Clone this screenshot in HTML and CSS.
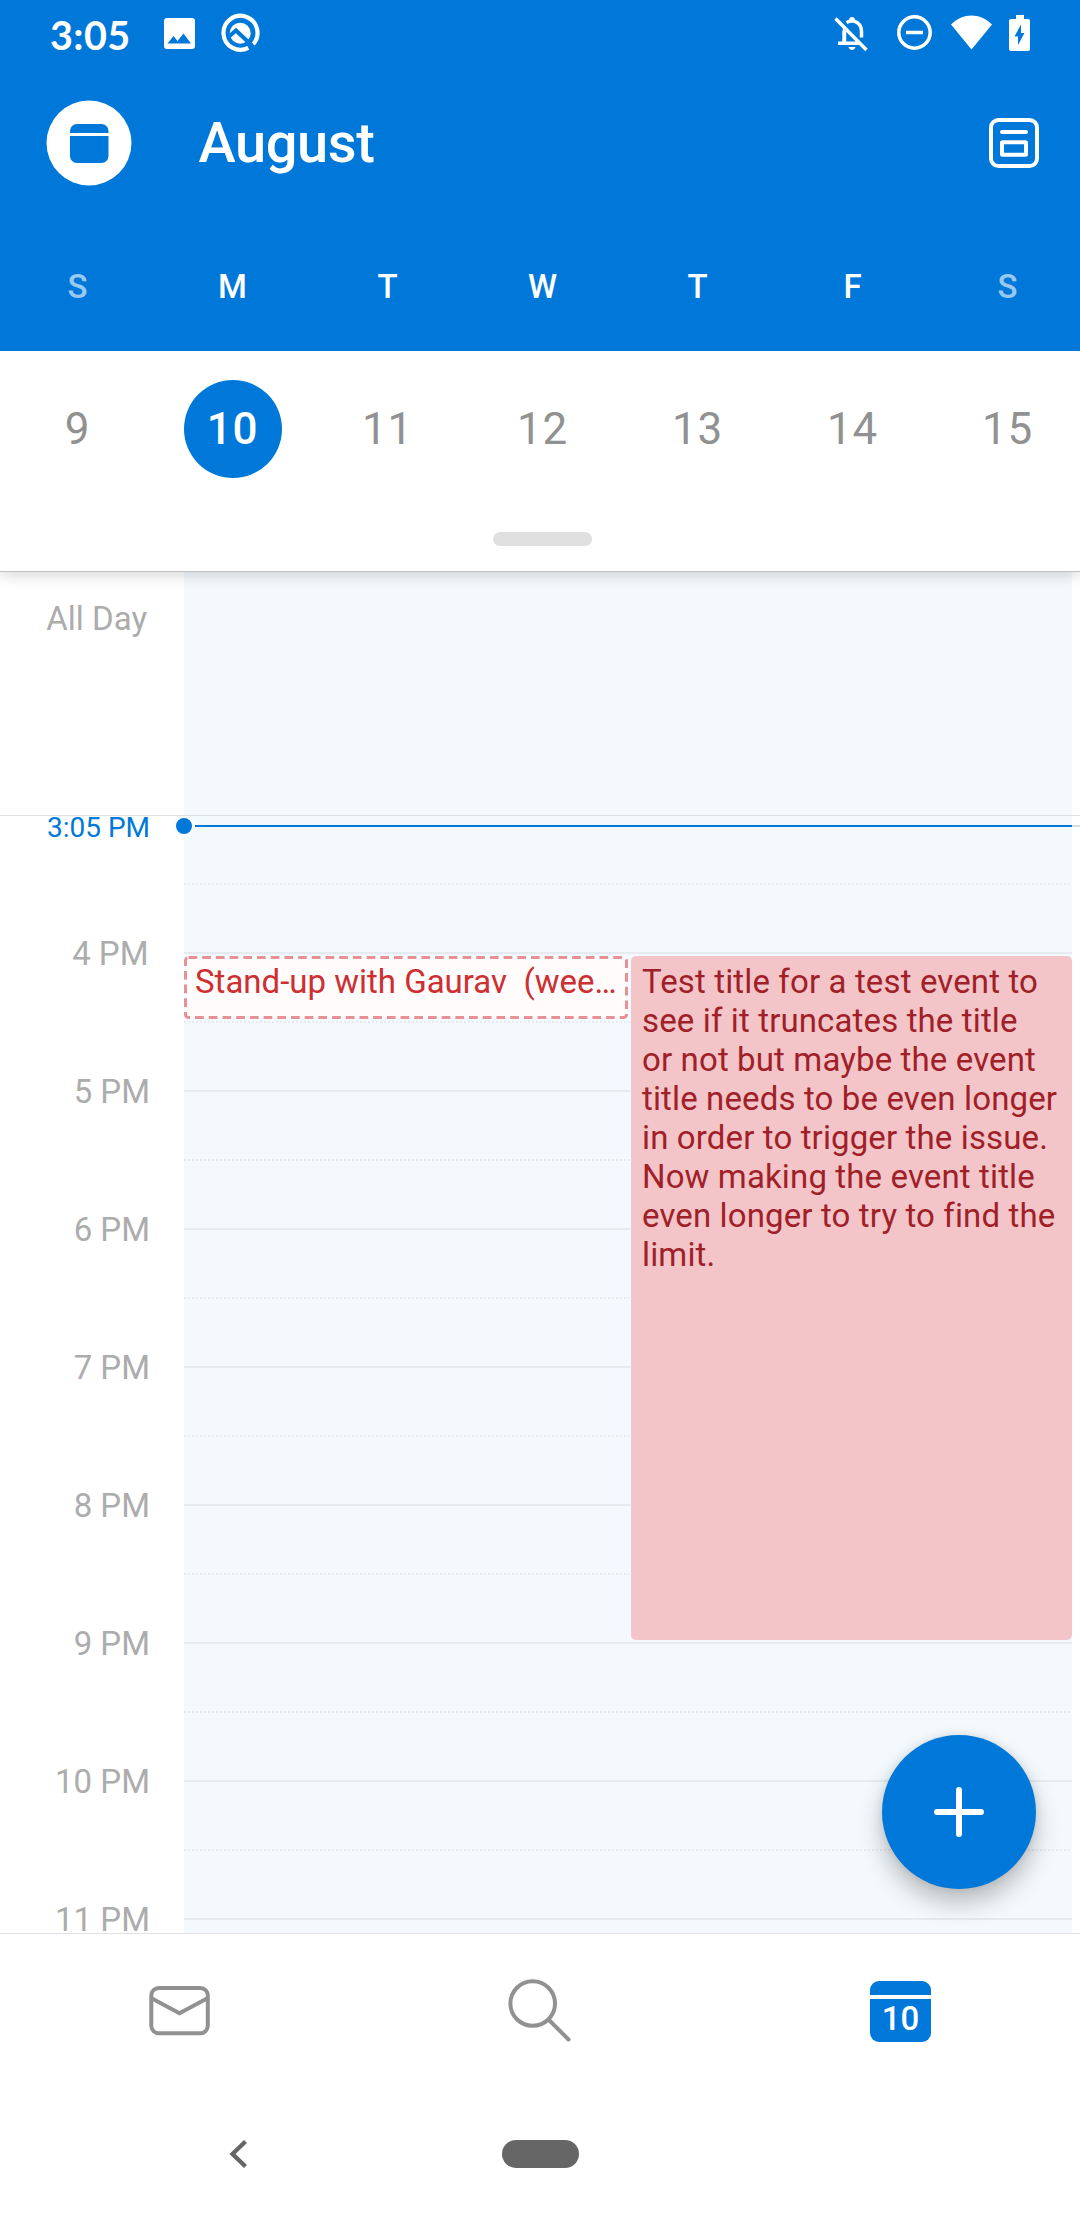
FILE: index.html
```html
<!DOCTYPE html>
<html lang="en">
<head>
<meta charset="utf-8">
<title>Calendar</title>
<link rel="stylesheet" href="styles.css">
</head>
<body>
<div class="screen">
  <header class="header">
    <div class="status">
      <span class="clock">3:05</span>
      <svg class="status-left" width="96" height="40" viewBox="164 13 96 40">
        <path fill="#fff" fill-rule="evenodd" d="M167 18h25a3 3 0 0 1 3 3v25a3 3 0 0 1-3 3h-25a3 3 0 0 1-3-3V21a3 3 0 0 1 3-3zM167.500 43.500h23.500l-7.500-10-6 7.500-4-5z"/>
        <path d="M248.300 47.900A17 17 0 1 1 253.100 44.200" fill="none" stroke="#fff" stroke-width="4.200"/>
        <circle cx="240.200" cy="33.200" r="10.500" fill="#fff"/>
        <path d="M229 36.500 L236 30.500 L252 45.500" fill="none" stroke="#0078d9" stroke-width="4"/>
      </svg>
      <svg class="status-right" width="200" height="40" viewBox="832 13 200 40">
        <g fill="none" stroke="#fff" stroke-width="3.500">
          <path d="M835.500 18.500L866.500 50M838 43.200h21M844 42V31M846.500 22.500c8-4 15 1 15 9v6M844.500 29v13"/>
          <circle cx="914.500" cy="32.500" r="15.700"/>
          <path d="M906 32.500h17"/>
        </g>
        <path fill="#fff" d="M849 20c0-4 6-4 6 0l-3 2zM848.500 47h7c-1 4-6 4-7 0zM951 24.500c12-12 29-12 41 0L971.500 49.500zM1016 15h8v4h4a2 2 0 0 1 2 2v28a2 2 0 0 1-2 2h-17a2 2 0 0 1-2-2V21a2 2 0 0 1 2-2h5z"/>
        <path fill="#0078d9" d="M1021 24.500v8.500h3.500l-6.500 12v-8.500h-3.500z"/>
      </svg>
    </div>
    <div class="appbar">
      <svg width="86" height="86" viewBox="0 0 86 86">
        <circle cx="43" cy="43" r="42.500" fill="#fff"/>
        <path fill="#0078d9" d="M24 33v-2a7 7 0 0 1 7-7h24.500a7 7 0 0 1 7 7v2zM24 36h38.500v20a7 7 0 0 1-7 7H31a7 7 0 0 1-7-7z"/>
      </svg>
      <h1 class="month">August</h1>
      <svg class="view-icon" width="50" height="50" viewBox="0 0 50 50" fill="none" stroke="#fff" stroke-width="4" stroke-linecap="round">
        <rect x="2" y="2" width="46" height="46" rx="7.500"/>
        <path d="M13 14h24"/>
        <rect x="13" y="24.300" width="24" height="12.500" rx=".5"/>
      </svg>
    </div>
    <div class="week weekdays">
      <span class="dim">S</span><span>M</span><span>T</span><span>W</span><span>T</span><span>F</span><span class="dim">S</span>
    </div>
  </header>

  <section class="sheet">
    <div class="week dates">
      <span>9</span><span class="today">10</span><span>11</span><span>12</span><span>13</span><span>14</span><span>15</span>
    </div>
    <div class="handle"></div>
  </section>

  <section class="allday">
    <div class="allday-label">All Day</div>
    <div class="allday-cell"></div>
  </section>

  <main class="timeline">
    <div class="now-row">
      <div class="now-label">3:05 PM</div>
      <div class="cell"></div>
    </div>
    <div class="row"><div class="hour first">4 PM</div><div class="cell"></div></div>
    <div class="row"><div class="hour">5 PM</div><div class="cell"></div></div>
    <div class="row"><div class="hour">6 PM</div><div class="cell"></div></div>
    <div class="row"><div class="hour">7 PM</div><div class="cell"></div></div>
    <div class="row"><div class="hour">8 PM</div><div class="cell"></div></div>
    <div class="row"><div class="hour">9 PM</div><div class="cell"></div></div>
    <div class="row"><div class="hour">10 PM</div><div class="cell"></div></div>
    <div class="row"><div class="hour">11 PM</div><div class="cell"></div></div>

    <div class="now-line"></div>
    <div class="now-rest"></div>
    <div class="now-dot"></div>

    <div class="event tentative">
      <svg class="outline" width="444" height="63" viewBox="0 0 444 63">
        <rect x="1.500" y="1.500" width="441" height="60" rx="3" fill="#fffcfb" stroke="#e69195" stroke-width="3" stroke-dasharray="8.700 5"/>
      </svg>
      <div class="event-title">Stand-up with Gaurav&nbsp; (weekly)</div>
    </div>
    <div class="event busy">Test title for a test event to see if it truncates the title<br>or not but maybe the event title needs to be even longer in order to trigger the issue. Now making the event title even longer to try to find the limit.</div>
  </main>

  <nav class="tabs">
    <div class="tab">
      <svg width="62" height="62" viewBox="149 1980 62 62" fill="none" stroke="#919191" stroke-width="4">
        <rect x="151.300" y="1988" width="56.500" height="45.300" rx="7.500"/>
        <path d="M152 1998.500L179.500 2013.200L207 1998.500"/>
      </svg>
    </div>
    <div class="tab">
      <svg width="64" height="64" viewBox="508 1979 64 64" fill="none" stroke="#919191" stroke-width="4" stroke-linecap="round">
        <circle cx="532.700" cy="2003.500" r="22.300"/>
        <path d="M549 2020L568.500 2039.500"/>
      </svg>
    </div>
    <div class="tab">
      <div class="cal"><div class="cal-top"></div><div class="cal-day">10</div></div>
    </div>
  </nav>
  <footer class="sysnav">
    <svg class="back" width="20" height="30" viewBox="0 0 20 30"><path d="M16.500 2.500L3.500 15L16.500 27.500" fill="none" stroke="#666" stroke-width="4.300"/></svg>
    <div class="home"></div>
  </footer>

  <div class="fab">
    <svg width="50" height="50" viewBox="0 0 50 50" stroke="#fff" stroke-width="6" stroke-linecap="round"><path d="M25 3v44M3 25h44"/></svg>
  </div>
</div>
</body>
</html>
```
FILE: styles.css
```css
* { box-sizing: border-box; }
body { margin: 0; background: #fff; }
.screen {
  position: relative;
  width: 1080px;
  height: 2220px;
  overflow: hidden;
  background: #fff;
  font-family: Roboto, "Liberation Sans", sans-serif;
  display: flex;
  flex-direction: column;
}
.header { height: 351px; background: #0078d9; color: #fff; flex: none; }
.status { height: 66px; display: flex; align-items: center; padding: 0 48px 0 50px; }
.clock { width: 114px; font: 700 39.500px/66px Lato, sans-serif; padding-top: 3px; letter-spacing: .4px; }
.status-right { margin-left: auto; }
.appbar { height: 154px; display: flex; align-items: center; padding: 0 41px 0 45.500px; }
.month { margin: 0 0 0 67px; font-size: 56px; line-height: 66px; font-weight: 500; letter-spacing: -.4px; }
.view-icon { margin-left: auto; }
.week { display: grid; grid-template-columns: repeat(7, 155px); justify-items: center; }
.weekdays { height: 131px; padding-top: 47px; font-size: 33px; line-height: 40px; font-weight: 500; }
.dim { opacity: .6; }

.sheet {
  position: relative;
  z-index: 1;
  height: 221px;
  flex: none;
  background: #fff;
  border-bottom: 1px solid #c0c2c4;
  box-shadow: 0 3px 14px rgba(0, 0, 0, .17);
  clip-path: inset(0 0 -30px 0);
}
.dates { height: 181px; padding-top: 29px; color: #919191; font-size: 44px; line-height: 98px; letter-spacing: .8px; }
.today { width: 98px; height: 98px; border-radius: 50%; background: #0078d9; color: #fff; font-weight: 500; text-align: center; }
.handle { width: 99px; height: 14px; margin-left: 493px; border-radius: 7px; background: #e0e0e0; }

.allday { display: flex; height: 244px; flex: none; border-bottom: 1px solid #dfe1e4; }
.allday-label { width: 184px; padding: 27px 37px 0 0; text-align: right; color: #acacac; font-size: 33px; line-height: 40px; }
.allday-cell { width: 888px; background: #f4f9fd; }

.timeline { position: relative; height: 1118px; flex: none; overflow: hidden; border-bottom: 1px solid #dfe1e4; }
.now-row, .row { display: flex; }
.now-row { height: 67px; }
.row { height: 138px; }
.cell { width: 888px; background-color: #f4f9fd; }
.row .cell {
  background-image:
    linear-gradient(#e6ebef, #e6ebef),
    repeating-linear-gradient(90deg, #e6ebef 0 2px, transparent 2px 4px);
  background-size: 100% 2px;
  background-position: 0 69px, 0 0;
  background-repeat: no-repeat;
}
.hour, .now-label { width: 184px; padding-right: 34px; text-align: right; }
.hour { color: #acacac; font-size: 33px; line-height: 141px; }
.first { padding-right: 35.500px; }
.now-label { color: #0078d9; font-size: 28px; line-height: 24px; }
.now-line { position: absolute; left: 195px; top: 9px; width: 877px; height: 2px; background: #0078d9; }
.now-rest { position: absolute; left: 1072px; top: 9px; width: 8px; height: 2px; background: #d9dde1; }
.now-dot { position: absolute; left: 173px; top: -1px; width: 22px; height: 22px; border: 3px solid #fafcfe; border-radius: 50%; background: #0078d9; }

.event { position: absolute; top: 140px; font-size: 33px; line-height: 39px; }
.tentative { left: 184px; width: 444px; height: 63px; color: #cd2f32; }
.outline { position: absolute; left: 0; top: 0; }
.event-title { position: relative; padding: 6px 0 0 11px; width: 436px; overflow: hidden; text-overflow: ellipsis; white-space: nowrap; }
.busy { left: 631px; width: 441px; height: 684px; padding: 6px 10px 0 11px; border-radius: 5px; background: #f3c5c9; color: #a01f28; letter-spacing: .13px; font-variant-ligatures: common-ligatures; }

.tabs { display: grid; grid-template-columns: repeat(3, 360px); height: 154px; flex: none; align-items: center; justify-items: center; }
.tab { display: flex; }
.cal { width: 61px; height: 61px; border-radius: 9px; overflow: hidden; display: flex; flex-direction: column; gap: 4px; margin-left: 1px; }
.cal-top { height: 14px; background: #0078d9; }
.cal-day { flex: 1; background: #0078d9; color: #fff; font-size: 33px; line-height: 40px; font-weight: 500; text-align: center; }
.sysnav { flex: 1; display: grid; grid-template-columns: 478px 124px 478px; align-items: center; justify-items: center; }
.home { width: 77px; height: 28px; border-radius: 14px; background: #666; }

.fab {
  position: absolute;
  left: 882px;
  top: 1735px;
  z-index: 2;
  width: 154px;
  height: 154px;
  border-radius: 50%;
  background: #0078d9;
  display: flex;
  align-items: center;
  justify-content: center;
  box-shadow: 0 14px 24px rgba(0, 0, 0, .24), 0 0 10px rgba(0, 0, 0, .1);
}
```
